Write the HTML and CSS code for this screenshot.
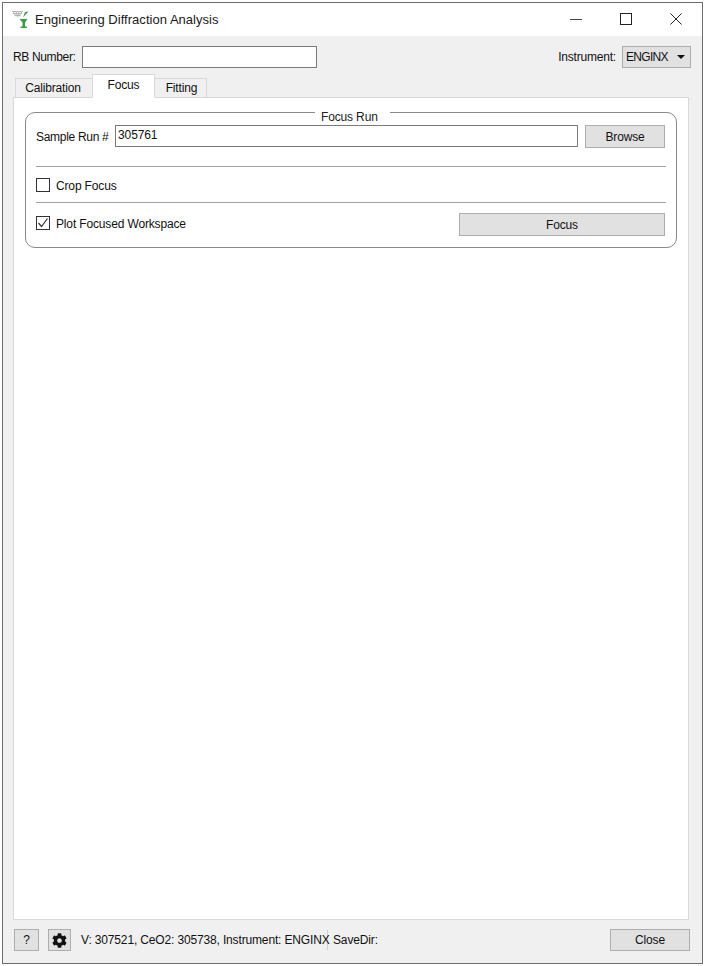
FILE: index.html
```html
<!DOCTYPE html>
<html lang="en">
<head>
<meta charset="utf-8">
<title>Engineering Diffraction Analysis</title>
<link rel="stylesheet" href="styles.css">
</head>
<body>
<div class="window">
  <header class="titlebar">
    <svg class="app-icon" viewBox="0 0 18 18" width="18" height="18" aria-hidden="true">
      <path d="M0 1.500h11M1 3.500h9M2.500 5.500h6M1 1.500l3 5M4 1.500l1.500 5M7 1.500l-1 5M10 1.500L7 6.500" stroke="#a8a8a8" stroke-width=".8" fill="none"/>
      <path d="M16.500 1.500l-3.500.5-2 5.500z" fill="#4c9a4c"/>
      <path d="M7.500 9h8l-2.500 3.500v4H15V18H8.500v-1.500h2v-4z" fill="#3f9a46"/>
    </svg>
    <span class="app-title">Engineering Diffraction Analysis</span>
    <div class="win-controls">
      <svg width="12" height="12" viewBox="0 0 12 12" aria-hidden="true"><path d="M0 6.500h12" stroke="#444" stroke-width="1"/></svg>
      <svg width="12" height="12" viewBox="0 0 12 12" aria-hidden="true"><rect x=".5" y=".5" width="11" height="11" fill="none" stroke="#222"/></svg>
      <svg width="12" height="12" viewBox="0 0 12 12" aria-hidden="true"><path d="M.5.500l11 11M11.500.500l-11 11" stroke="#222"/></svg>
    </div>
  </header>

  <div class="content">
    <div class="toprow">
      <label class="rb-label">RB Number:</label>
      <input class="rb-input" type="text">
      <span class="spacer"></span>
      <label class="inst-label">Instrument:</label>
      <div class="combo"><span class="combo-text">ENGINX</span><i class="arrow"></i></div>
    </div>

    <div class="tabs">
      <div class="tab tab-cal">Calibration</div>
      <div class="tab tab-active">Focus</div>
      <div class="tab tab-fit">Fitting</div>
    </div>

    <main class="pane">
      <fieldset class="group">
        <legend>Focus Run</legend>
        <div class="run-row">
          <label class="run-label">Sample Run #</label>
          <div class="run-input">305761</div>
          <button class="btn browse" type="button">Browse</button>
        </div>
        <hr class="rule rule-a">
        <div class="check-row crop">
          <span class="check"></span>
          <span class="check-text">Crop Focus</span>
        </div>
        <hr class="rule rule-b">
        <div class="check-row plot">
          <span class="check">
            <svg width="12" height="12" viewBox="0 0 12 12" aria-hidden="true"><path d="M1.500 6l3 3.500 6-8" fill="none" stroke="#333" stroke-width="1.200"/></svg>
          </span>
          <span class="check-text plot-text">Plot Focused Workspace</span>
          <button class="btn focus" type="button">Focus</button>
        </div>
      </fieldset>
    </main>

    <footer class="footer">
      <button class="btn help" type="button">?</button>
      <button class="btn gear" type="button" aria-label="Settings">
        <svg width="15" height="15" viewBox="0 0 512 512" aria-hidden="true"><path fill="#111" d="M487.4 315.700l-42.600-24.600c4.300-23.200 4.300-47 0-70.200l42.600-24.600c4.900-2.800 7.100-8.600 5.500-14-11.100-35.600-30-67.800-54.700-94.600-3.800-4.100-10-5.100-14.800-2.300L380.800 110c-17.900-15.400-38.500-27.300-60.800-35.100V25.800c0-5.600-3.900-10.500-9.400-11.700-36.700-8.200-74.300-7.800-109.200 0-5.500 1.200-9.400 6.100-9.400 11.700V75c-22.200 7.900-42.800 19.800-60.800 35.100L88.700 85.500c-4.900-2.800-11-1.900-14.800 2.300-24.700 26.700-43.600 58.900-54.700 94.600-1.700 5.400.6 11.200 5.500 14L67.300 221c-4.300 23.200-4.300 47 0 70.200l-42.600 24.600c-4.900 2.800-7.100 8.600-5.500 14 11.100 35.600 30 67.800 54.700 94.600 3.800 4.100 10 5.100 14.800 2.300l42.600-24.600c17.900 15.400 38.500 27.300 60.800 35.100v49.200c0 5.600 3.900 10.500 9.400 11.700 36.700 8.200 74.300 7.800 109.200 0 5.500-1.200 9.400-6.100 9.400-11.700v-49.200c22.200-7.900 42.800-19.800 60.800-35.100l42.600 24.600c4.900 2.800 11 1.900 14.800-2.300 24.700-26.700 43.600-58.900 54.700-94.600 1.500-5.500-.7-11.300-5.600-14.100zM256 336c-44.100 0-80-35.900-80-80s35.900-80 80-80 80 35.900 80 80-35.900 80-80 80z"/></svg>
      </button>
      <span class="status">V: 307521, CeO2: 305738, Instrument: ENGINX</span>
      <span class="savedir">SaveDir:</span>
      <span class="spacer"></span>
      <button class="btn close" type="button">Close</button>
    </footer>
  </div>
</div>
</body>
</html>
```
FILE: styles.css
```css
* { box-sizing: border-box; }
html, body { margin: 0; padding: 0; background: #fff; }
body {
  width: 704px;
  height: 966px;
  padding: 2px 1px 2px 2px;
  font-family: "Liberation Sans", Arial, sans-serif;
  font-size: 12px;
  letter-spacing: -.15px;
  color: #111;
}
.window {
  height: 962px;
  display: flex;
  flex-direction: column;
  border: 1px solid #6e6e6e;
  background: #f0f0f0;
}
.titlebar {
  height: 33px;
  flex: none;
  display: flex;
  align-items: center;
  background: #fff;
  padding-left: 9px;
}
.app-icon { flex: none; margin-top: -2px; }
.app-title { margin-left: 5px; font-size: 13px; color: #1a1a1a; letter-spacing: .03px; margin-top: -1px; }
.win-controls { margin-left: auto; display: flex; gap: 38px; padding-right: 20px; margin-top: -2px; }
.content {
  flex: 1;
  min-height: 0;
  display: flex;
  flex-direction: column;
  padding: 9px 13px 0 10px;
}
.toprow { height: 23px; display: flex; align-items: center; flex: none; }
.rb-label { width: 69px; letter-spacing: -.35px; }
.rb-input {
  width: 235px;
  height: 22px;
  border: 1px solid #7a7a7a;
  background: #fff;
  padding: 0 3px;
}
.spacer { flex: 1; }
.inst-label { margin-right: 6px; letter-spacing: -.2px; }
.combo {
  width: 69px;
  height: 22px;
  margin-right: -2px;
  display: flex;
  align-items: center;
  justify-content: space-between;
  padding: 0 5px 0 3px;
  background: #e1e1e1;
  border: 1px solid #adadad;
}
.combo-text { letter-spacing: -.7px; }
.arrow {
  width: 0;
  height: 0;
  border-left: 4px solid transparent;
  border-right: 4px solid transparent;
  border-top: 4px solid #111;
}
.tabs {
  display: flex;
  align-items: flex-end;
  height: 30px;
  padding-left: 2px;
  flex: none;
  position: relative;
  z-index: 1;
  margin-bottom: -1px;
}
.tab {
  height: 20px;
  display: flex;
  align-items: center;
  justify-content: center;
  background: #f0f0f0;
  border: 1px solid #d9d9d9;
}
.tab-cal { width: 77px; border-right: 0; padding-right: 2px; }
.tab-active {
  width: 63px;
  height: 24px;
  padding-bottom: 2px;
  background: #fff;
  border-bottom-color: #fff;
}
.tab-fit { width: 52px; border-left: 0; padding-left: 2px; }
.pane {
  flex: 1;
  min-height: 0;
  background: #fff;
  border: 1px solid #d9d9d9;
  padding: 2px 11px 0 11px;
}
.group {
  margin: 0;
  min-width: 0;
  height: 148px;
  padding: 0 10px;
  border: 1px solid #8a8a8a;
  border-radius: 10px;
}
.group legend {
  margin: 0 0 0 279px;
  padding: 10px 0 0 6px;
  width: 75px;
  text-align: left;
  line-height: 14px;
  white-space: nowrap;
  color: #222;
}
.run-row { display: flex; align-items: flex-start; height: 23px; margin-top: 1px; }
.run-label { width: 79px; line-height: 22px; letter-spacing: -.3px; padding-top: 1px; }
.run-input {
  width: 463px;
  height: 22px;
  border: 1px solid #7a7a7a;
  padding: 0 2px;
  line-height: 19px;
  letter-spacing: -.1px;
}
.btn {
  font: inherit;
  letter-spacing: inherit;
  color: #111;
  background: #e1e1e1;
  border: 1px solid #adadad;
  padding: 0;
  display: flex;
  align-items: center;
  justify-content: center;
}
.browse { width: 80px; height: 23px; margin-left: 7px; }
.rule { border: 0; border-top: 1px solid #a0a0a0; height: 0; margin: 0; width: 630px; }
.rule-a { margin-top: 18px; }
.check-row { display: flex; align-items: center; }
.crop { height: 35px; }
.check {
  width: 14px;
  height: 14px;
  flex: none;
  border: 1px solid #333;
  background: #fff;
  margin-right: 6px;
  display: flex;
  align-items: center;
  justify-content: center;
}
.check-text { padding-top: 2px; }
.plot { height: 40px; width: 629px; }
.plot-text { width: 403px; }
.focus { width: 206px; height: 23px; margin-top: 3px; }
.footer {
  height: 43px;
  flex: none;
  display: flex;
  align-items: center;
  padding-left: 1px;
  padding-bottom: 3px;
}
.help { width: 25px; height: 22px; }
.gear { width: 23px; height: 22px; margin-left: 9px; }
.status { margin-left: 10px; width: 247px; line-height: 20px; border-right: 1px solid #d0d0d0; white-space: nowrap; }
.savedir { margin-left: 5px; }
.close { width: 80px; height: 22px; margin-right: -1px; }
```
